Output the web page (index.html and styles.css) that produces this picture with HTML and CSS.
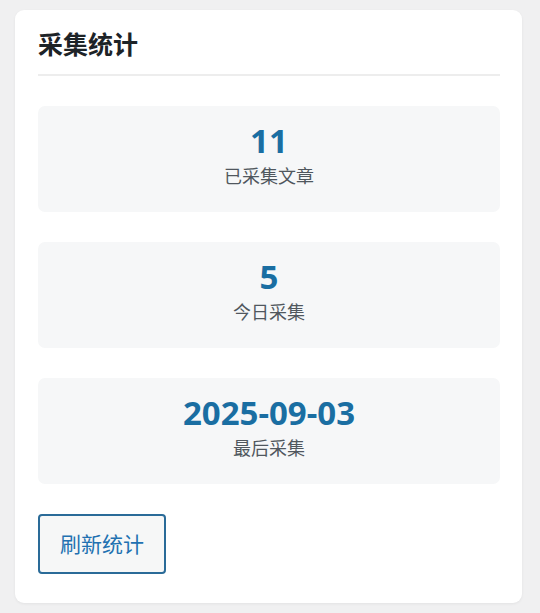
FILE: index.html
```html
<!DOCTYPE html>
<html lang="zh-CN">
<head>
<meta charset="utf-8">
<link rel="stylesheet" href="styles.css">
</head>
<body>
<div class="card">
  <h2 class="card-title">采集统计</h2>
  <div class="stats">
    <div class="stat">
      <div class="stat-num">11</div>
      <div class="stat-label">已采集文章</div>
    </div>
    <div class="stat">
      <div class="stat-num">5</div>
      <div class="stat-label">今日采集</div>
    </div>
    <div class="stat">
      <div class="stat-num">2025-09-03</div>
      <div class="stat-label">最后采集</div>
    </div>
  </div>
  <button class="btn">刷新统计</button>
</div>
</body>
</html>
```

FILE: styles.css
```css
html, body {
  margin: 0;
  padding: 0;
  background: #f0f0f1;
}
body {
  padding: 10px 18px 9px 15px;
  font-family: "Noto Sans", "Noto Sans CJK SC", sans-serif;
}
.card {
  background: #ffffff;
  border-radius: 9px;
  padding: 18px 22px 29px 23px;
  box-shadow: 0 1px 3px rgba(0,0,0,0.06);
  display: flex;
  flex-direction: column;
  align-items: flex-start;
}
.card-title {
  align-self: stretch;
  margin: 0;
  font-size: 25px;
  line-height: 32px;
  font-weight: 700;
  color: #1d2327;
  padding-bottom: 14px;
  border-bottom: 2px solid #ededed;
}
.stats {
  align-self: stretch;
  display: flex;
  flex-direction: column;
  gap: 30px;
  margin-top: 30px;
}
.stat {
  background: #f6f7f8;
  border-radius: 7px;
  height: 106px;
  box-sizing: border-box;
  display: flex;
  flex-direction: column;
  align-items: center;
  padding-top: 15px;
}
.stat-num {
  font-size: 33px;
  line-height: 40px;
  font-weight: 700;
  color: #1a6ea2;
}
.stat-label {
  font-size: 18px;
  line-height: 24px;
  color: #50575e;
  margin-top: 3px;
}
.btn {
  margin-top: 30px;
  width: 128px;
  height: 60px;
  border: 2px solid #2a6b98;
  border-radius: 4px;
  background: #f6f7f7;
  color: #2271b1;
  font-family: "Noto Sans CJK SC", sans-serif;
  font-size: 21px;
  padding: 0 0 2px;
}
```
